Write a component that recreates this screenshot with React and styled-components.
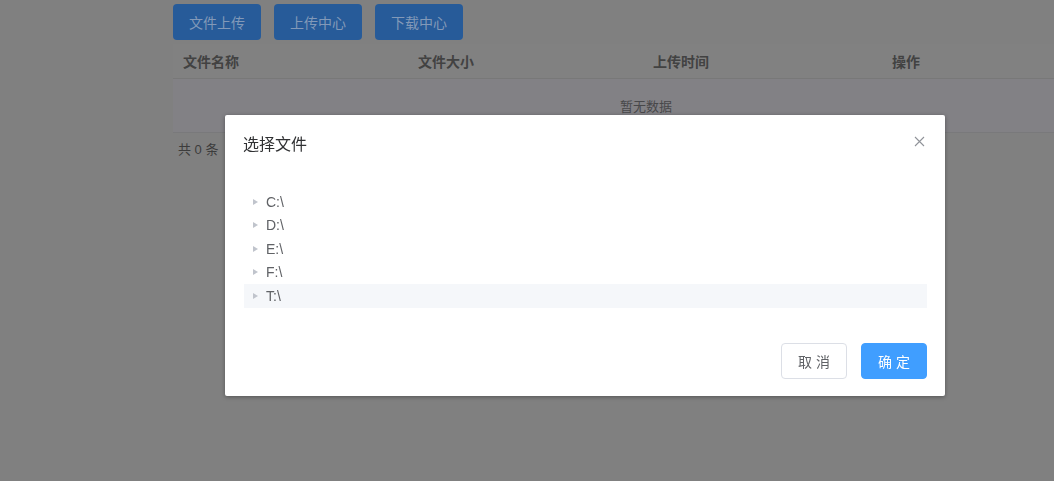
import React from 'react';
import styled, { createGlobalStyle } from 'styled-components';

const GlobalStyle = createGlobalStyle`
  html, body {
    margin: 0;
    padding: 0;
    background: #808080;
    overflow: hidden;
    font-family: "Liberation Sans", "Noto Sans CJK SC", sans-serif;
  }
  * { box-sizing: border-box; }
`;

const Page = styled.div`
  width: 1054px;
  height: 481px;
  padding: 4px 0 0 173px;
  background: #808080;
`;

const Toolbar = styled.div`
  display: flex;
  gap: 13px;
  margin-bottom: 4px;
`;

const ToolButton = styled.button`
  width: 88px;
  height: 36px;
  border: none;
  border-radius: 4px;
  background: #275b99;
  color: #8299b8;
  font-family: inherit;
  font-size: 14px;
  padding: 0;
`;

const Table = styled.div`
  width: 881px;
`;

const HeaderRow = styled.div`
  display: grid;
  grid-template-columns: 235px 235px 235px 1fr;
  height: 35px;
  align-items: center;
  border-bottom: 1px solid #787878;
  background: #818181;
`;

const HeaderCell = styled.div`
  padding-left: ${p => p.$pad || 10}px;
  font-size: 14px;
  font-weight: bold;
  color: #424242;
`;

const EmptyRow = styled.div`
  height: 54px;
  display: flex;
  align-items: center;
  justify-content: flex-start;
  padding-left: 447px;
  border-bottom: 1px solid #79797b;
  background: #828185;
  font-size: 13px;
  color: #48484a;
`;

const Pagination = styled.div`
  padding: 7px 0 0 5px;
  line-height: 20px;
  font-size: 13px;
  color: #3c3c3c;
`;

const Mask = styled.div`
  position: fixed;
  inset: 0;
`;

const Dialog = styled.div`
  position: relative;
  width: 720px;
  margin: 115px 0 0 225px;
  background: #fff;
  border-radius: 2px;
  box-shadow: 0 1px 4px rgba(0, 0, 0, 0.35);
`;

const DialogHeader = styled.div`
  padding: 18px 20px 10px 18px;
`;

const Title = styled.span`
  font-size: 16px;
  line-height: 24px;
  color: #303133;
`;

const CloseButton = styled.button`
  position: absolute;
  top: 20px;
  right: 20px;
  width: 12px;
  height: 12px;
  padding: 0;
  border: none;
  background: none;
  display: flex;
  align-items: center;
  justify-content: center;
`;

const DialogBody = styled.div`
  padding: 23px 18px 0 19px;
`;

const TreeNode = styled.div`
  display: flex;
  align-items: center;
  height: 23.5px;
  background: ${p => (p.$hover ? '#f5f7fa' : 'transparent')};
  font-size: 14px;
  color: #606266;
`;

const Caret = styled.span`
  width: 0;
  height: 0;
  margin: 0 8px 0 9px;
  border-left: 5px solid #c0c4cc;
  border-top: 3.5px solid transparent;
  border-bottom: 3.5px solid transparent;
`;

const DialogFooter = styled.div`
  display: flex;
  justify-content: flex-end;
  gap: 14px;
  padding: 35px 18px 17px;
`;

const FooterButton = styled.button`
  width: 66px;
  height: 36px;
  padding: 0;
  border-radius: 4px;
  font-family: inherit;
  font-size: 14px;
  border: 1px solid ${p => (p.$primary ? '#409eff' : '#dcdfe6')};
  background: ${p => (p.$primary ? '#409eff' : '#fff')};
  color: ${p => (p.$primary ? '#fff' : '#606266')};
`;

const drives = ['C:\\', 'D:\\', 'E:\\', 'F:\\', 'T:\\'];

export default function App() {
  return (
    <>
      <GlobalStyle />
      <Page>
        <Toolbar>
          <ToolButton>文件上传</ToolButton>
          <ToolButton>上传中心</ToolButton>
          <ToolButton>下载中心</ToolButton>
        </Toolbar>
        <Table>
          <HeaderRow>
            <HeaderCell>文件名称</HeaderCell>
            <HeaderCell>文件大小</HeaderCell>
            <HeaderCell>上传时间</HeaderCell>
            <HeaderCell $pad={14}>操作</HeaderCell>
          </HeaderRow>
          <EmptyRow>暂无数据</EmptyRow>
        </Table>
        <Pagination>共 0 条</Pagination>
      </Page>
      <Mask>
        <Dialog>
          <DialogHeader>
            <Title>选择文件</Title>
            <CloseButton aria-label="close">
              <svg width="11" height="11" viewBox="0 0 11 11">
                <path d="M1 1L10 10M10 1L1 10" stroke="#909399" strokeWidth="1.1" fill="none" />
              </svg>
            </CloseButton>
          </DialogHeader>
          <DialogBody>
            {drives.map((d, i) => (
              <TreeNode key={d} $hover={i === drives.length - 1}>
                <Caret />
                {d}
              </TreeNode>
            ))}
          </DialogBody>
          <DialogFooter>
            <FooterButton>取 消</FooterButton>
            <FooterButton $primary>确 定</FooterButton>
          </DialogFooter>
        </Dialog>
      </Mask>
    </>
  );
}
